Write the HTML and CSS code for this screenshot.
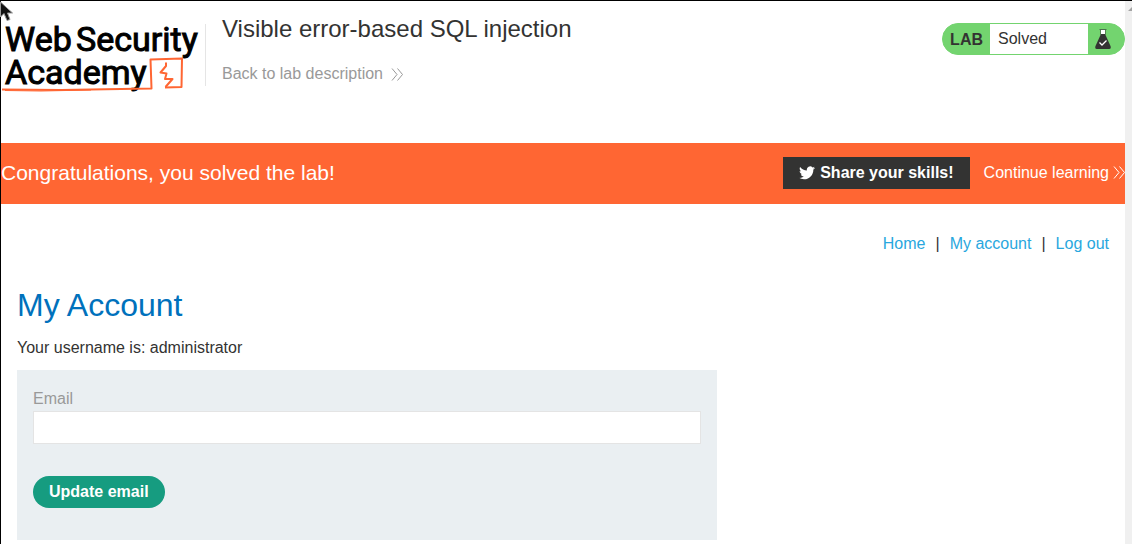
FILE: index.html
```html
<!DOCTYPE html>
<html lang="en">
<head>
<meta charset="utf-8">
<meta name="viewport" content="width=device-width, initial-scale=1">
<title>Visible error-based SQL injection</title>
<link rel="stylesheet" href="styles.css">
</head>
<body>
<div class="page">
  <header class="lab-header">
    <a class="logo" href="#" aria-label="Web Security Academy">
      <svg width="204" height="80" viewBox="0 0 204 80">
        <g class="logo-text">
          <text x="4" y="35">Web</text>
          <text x="75" y="35">Security</text>
          <text x="4" y="68">Academy</text>
        </g>
        <g fill="none" stroke="#ff6633" stroke-linejoin="round">
          <path d="M1 73.500L60 74L120 73L150.500 72.500L149.500 43.500L181 42.500L180.500 71L164 71.500" stroke-width="2"/>
          <path d="M4 74.500L40 75L90 74" stroke-width="1"/>
          <path d="M165 46.500V50L159.500 56.500L165.500 57.500L164 63L171.500 63L164.500 71" stroke-width="2"/>
        </g>
      </svg>
    </a>
    <div class="title-box">
      <h2 class="title">Visible error-based SQL injection</h2>
      <a class="back-link" href="#">Back to lab description
        <svg class="chevrons" width="12" height="13" viewBox="0 0 12 13"><path d="M1 .5L6 6.500L1 12.500M6.500 .5L11.500 6.500L6.500 12.500"/></svg>
      </a>
    </div>
    <div class="lab-status">
      <span class="lab-tag">LAB</span>
      <p class="lab-state">Solved</p>
      <span class="lab-icon">
        <svg width="16" height="20" viewBox="0 0 16 20">
          <path d="M5.500 .5V6L0.500 17Q-.5 20 2 20H14Q16.500 20 15.500 17L10.500 6V.5Z" fill="#333332"/>
          <path d="M6 1H10V5H6Z" fill="#fff"/>
          <path d="M4.500 .5H11.500" stroke="#4c7050" fill="none"/>
          <path d="M4.500 13.500L7 16L11.500 11.500" stroke="#fff" stroke-width="1.300" fill="none"/>
        </svg>
      </span>
    </div>
  </header>
  <section class="banner">
    <h4 class="banner-title">Congratulations, you solved the lab!</h4>
    <div class="banner-actions">
      <button class="share" type="button">
        <svg width="16" height="14" viewBox="0 0 24 20"><path fill="#fff" d="M24 2.400c-.9.400-1.800.7-2.800.8 1-.6 1.800-1.600 2.200-2.700-1 .6-2 1-3.100 1.200A4.900 4.900 0 0 0 11.900 6.200C7.800 6 4.200 4 1.700.9.400 3.100 1 6 3.200 7.500c-.8 0-1.600-.2-2.200-.6 0 2.400 1.600 4.400 3.900 4.900-.7.200-1.500.2-2.200.1.600 2 2.400 3.400 4.600 3.400A9.900 9.900 0 0 1 0 17.300C2.200 18.700 4.800 19.500 7.500 19.500c9.200 0 14.300-7.700 14-14.600 1-.7 1.800-1.600 2.500-2.500z"/></svg>
        <span>Share your skills!</span>
      </button>
      <a class="continue" href="#">Continue learning
        <svg class="chevrons" width="12" height="13" viewBox="0 0 12 13"><path d="M1 .5L6 6.500L1 12.500M6.500 .5L11.500 6.500L6.500 12.500"/></svg>
      </a>
    </div>
  </section>
  <main class="content">
    <nav class="nav">
      <a href="#">Home</a><span>|</span><a href="#">My account</a><span>|</span><a href="#">Log out</a>
    </nav>
    <h1 class="heading">My Account</h1>
    <p class="username">Your username is: administrator</p>
    <form class="email-form">
      <label for="email">Email</label>
      <input id="email" type="email" name="email">
      <button class="update" type="button">Update email</button>
    </form>
  </main>
</div>
<div class="scroll-track"><svg width="7" height="12" viewBox="0 0 7 12"><path d="M3 10L7 6V10Z" fill="#a3a3a3"/></svg></div>
<svg class="pointer" width="14" height="20" viewBox="0 0 14 20"><path d="M.5 1V16L4 12.500L7 19.500L10 18.500L7.500 12H12.500Z" fill="#111" stroke="#999" stroke-width="1"/></svg>
</body>
</html>
```
FILE: styles.css
```css
* {
  box-sizing: border-box;
}

body {
  display: flex;
  min-height: 100vh;
  margin: 0;
  border-top: 1px solid #000;
  border-left: 1px solid #000;
  background: #fff;
  color: #333332;
  font: 16px/20px "Liberation Sans", Arial, sans-serif;
}

h1, h2, h4, p {
  margin: 0;
  font-weight: 400;
}

a {
  text-decoration: none;
}

button, input {
  font: inherit;
}

.page {
  flex: 1;
  min-width: 0;
}

.lab-header {
  display: flex;
  align-items: flex-start;
  min-height: 142px;
  padding-top: 15px;
}

.logo svg {
  display: block;
}

.logo-text {
  fill: #000;
  stroke: #000;
  stroke-width: 1px;
  font: 400 34px Roboto, sans-serif;
}

.title-box {
  flex: 1;
  margin-top: 8px;
  height: 62px;
  padding-left: 16px;
  border-left: 1px solid #e5e5e5;
}

.title {
  margin-top: -9px;
  font-size: 24px;
  line-height: 28px;
}

.back-link {
  display: flex;
  align-items: center;
  gap: 8px;
  margin-top: 21px;
  color: #999;
}

.chevrons {
  fill: none;
  stroke: currentColor;
  stroke-width: 1;
}

.lab-status {
  display: flex;
  align-items: stretch;
  height: 32px;
  margin-top: 7px;
  overflow: hidden;
  border: 1px solid #73d46f;
  border-radius: 16px;
  background: #73d46f;
}

.lab-tag {
  padding: 6px 7px;
  font-weight: 700;
}

.lab-state {
  width: 98px;
  padding: 5px 8px;
  background: #fff;
}

.lab-icon {
  width: 36px;
  padding: 5px 7px;
}

.banner {
  display: flex;
  align-items: center;
  justify-content: space-between;
  min-height: 61px;
  padding-bottom: 2px;
  background: #ff6633;
  color: #fff;
}

.banner-title {
  font-size: 21px;
  line-height: 24px;
}

.banner-actions {
  display: flex;
  align-items: center;
  gap: 14px;
}

.share {
  display: flex;
  align-items: center;
  gap: 5px;
  height: 32px;
  padding: 0 16px;
  border: 0;
  background: #333332;
  color: #fff;
  font-weight: 700;
}

.continue {
  display: flex;
  align-items: center;
  gap: 4px;
  color: #fff;
}

.content {
  padding: 30px 16px 4px;
}

.nav {
  display: flex;
  justify-content: flex-end;
  gap: 10px;
}

.nav a {
  color: #29a7de;
}

.heading {
  margin-top: 33px;
  color: #0071bc;
  font-size: 32px;
  line-height: 36px;
}

.username {
  margin-top: 15px;
}

.email-form {
  display: flex;
  flex-direction: column;
  max-width: 700px;
  margin-top: 12px;
  padding: 19px 16px 32px;
  background: #eaeff2;
}

.email-form label {
  color: #999;
}

.email-form input {
  height: 33px;
  margin-top: 2px;
  padding: 0 8px;
  border: 1px solid #e4e4e4;
  border-radius: 0;
  background: #fff;
}

.update {
  align-self: flex-start;
  height: 32px;
  margin-top: 32px;
  padding: 0 16px;
  border: 0;
  border-radius: 16px;
  background: #169c80;
  color: #fff;
  font-weight: 700;
}

.scroll-track {
  width: 7px;
  background: #f0f0f0;
}

.scroll-track svg {
  display: block;
}

.pointer {
  position: absolute;
  top: 1px;
  left: 0;
}
```
